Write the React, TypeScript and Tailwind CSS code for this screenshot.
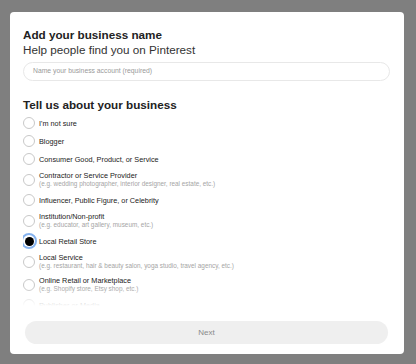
import React from "react";

type Option = { label: string; hint?: string };

const options: Option[] = [
  { label: "I'm not sure" },
  { label: "Blogger" },
  { label: "Consumer Good, Product, or Service" },
  {
    label: "Contractor or Service Provider",
    hint: "(e.g. wedding photographer, interior designer, real estate, etc.)",
  },
  { label: "Influencer, Public Figure, or Celebrity" },
  { label: "Institution/Non-profit", hint: "(e.g. educator, art gallery, museum, etc.)" },
  { label: "Local Retail Store" },
  {
    label: "Local Service",
    hint: "(e.g. restaurant, hair & beauty salon, yoga studio, travel agency, etc.)",
  },
  { label: "Online Retail or Marketplace", hint: "(e.g. Shopify store, Etsy shop, etc.)" },
  { label: "Publisher or Media" },
];

const selected = "Local Retail Store";

function Radio({ checked }: { checked: boolean }) {
  if (checked) {
    return (
      <span className="w-[12px] h-[12px] shrink-0 rounded-full bg-white ring-2 ring-[#86b3ef] flex items-center justify-center">
        <span className="w-[9px] h-[9px] rounded-full bg-black" />
      </span>
    );
  }
  return <span className="w-[12px] h-[12px] shrink-0 rounded-full border border-[#c8c8c8] bg-white" />;
}

export default function App() {
  return (
    <div
      className="w-[416px] h-[364px] bg-[#7f7f7f] pt-[12px] pl-[10px]"
      style={{ fontFamily: '"Liberation Sans", Arial, sans-serif' }}
    >
      <div className="w-[394px] h-[342px] bg-white rounded-[4px] flex flex-col pt-[15px] pl-[13px] pr-[14px] pb-[10px]">
        <h1 className="text-[11.7px] leading-[15px] font-bold text-[#222]">Add your business name</h1>
        <p className="text-[11.7px] leading-[15px] text-[#333]">Help people find you on Pinterest</p>
        <div className="mt-[5px] h-[19px] rounded-full border border-[#e8e8e8] flex items-center pl-[9px]">
          <span className="text-[6.8px] text-[#9a9a9a]">Name your business account (required)</span>
        </div>

        <h2 className="mt-[16px] text-[11.7px] leading-[16px] font-bold text-[#222]">
          Tell us about your business
        </h2>

        <div className="relative mt-[4px] h-[189px] overflow-hidden">
          <div className="flex flex-col gap-[6px]">
            {options.map((o) => (
              <div key={o.label} className="flex items-center gap-[4px]">
                <Radio checked={o.label === selected} />
                <div className="flex flex-col">
                  <span className="text-[7.3px] leading-[9px] text-[#222]">{o.label}</span>
                  {o.hint && (
                    <span className="text-[6.4px] leading-[8px] text-[#a5a5a5]">{o.hint}</span>
                  )}
                </div>
              </div>
            ))}
          </div>
          <div className="absolute left-0 right-0 bottom-0 h-[18px] bg-gradient-to-b from-white/0 to-white" />
        </div>

        <button className="mt-[15px] mx-[2px] h-[23px] rounded-full bg-[#efefef] text-[8px] text-[#8a8a8a]">
          Next
        </button>
      </div>
    </div>
  );
}
